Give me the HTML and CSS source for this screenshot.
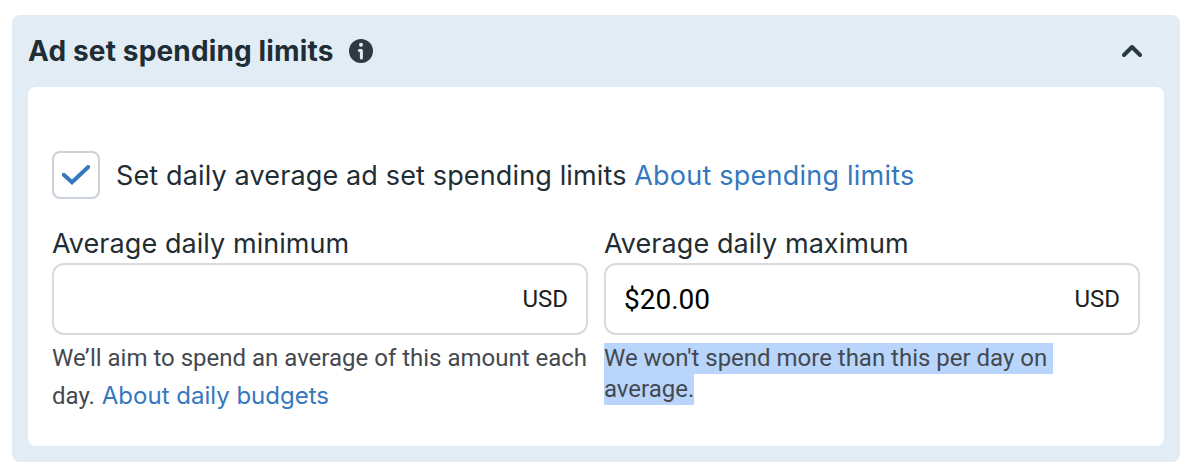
FILE: index.html
```html
<!DOCTYPE html>
<html lang="en">
  <head>
    <meta charset="UTF-8" />
    <meta name="viewport" content="width=device-width, initial-scale=1.0" />
    <title>Ad set spending limits</title>
    <link rel="stylesheet" href="styles.css">
  </head>
  <body>
    <section class="panel">
      <header class="panel-header">
        <h2>Ad set spending limits</h2>
        <svg class="info-icon" viewBox="0 0 24 24" width="24" height="24">
          <circle cx="12" cy="12" r="12" fill="#2d3a43" />
          <circle cx="12" cy="5.8" r="2" fill="#e2ecf5" />
          <path d="M10.3 11.4h2.1V19" fill="none" stroke="#e2ecf5" stroke-width="3" stroke-linecap="round" stroke-linejoin="round" />
        </svg>
        <svg class="chevron" viewBox="0 0 20 12" width="20" height="12">
          <path d="M2 10l8-8 8 8" fill="none" stroke="#283943" stroke-width="4" stroke-linecap="round" stroke-linejoin="round" />
        </svg>
      </header>

      <div class="card">
        <div class="check-row">
          <span class="checkbox">
            <svg viewBox="0 0 28 20" width="28" height="20">
              <path d="M1.8 9.8l8.2 7.4L26.2 2" fill="none" stroke="#3578be" stroke-width="4" stroke-linecap="round" />
            </svg>
          </span>
          <p><span class="check-label">Set daily average ad set spending limits</span> <a href="#" class="check-link">About spending limits</a></p>
        </div>

        <div class="fields">
          <div class="field">
            <label for="minimum">Average daily minimum</label>
            <div class="input-box">
              <input type="text" id="minimum" />
              <span>USD</span>
            </div>
            <p class="help help-min">We’ll aim to spend an average of this amount each<br />day. <a href="#">About daily budgets</a></p>
          </div>
          <div class="field">
            <label for="maximum">Average daily maximum</label>
            <div class="input-box">
              <input type="text" id="maximum" value="$20.00" />
              <span>USD</span>
            </div>
            <p class="help">
              <mark>We won't spend more than this per day on&nbsp;</mark>
              <mark>average.</mark>
            </p>
          </div>
        </div>
      </div>
    </section>
  </body>
</html>
```
FILE: styles.css
```css
/* General Styles */
* {
  box-sizing: border-box;
}

body {
  font-family: "Inter", sans-serif;
  margin: 0;
  padding: 15px 14px 14px 12px;
  background-color: #ffffff;
  color: #1f2d35;
}

h2,
p {
  margin: 0;
}

a {
  color: #3578be;
  text-decoration: none;
}

/* Panel Styles */
.panel {
  height: 447px;
  padding: 0 16px 16px;
  background-color: #e2ecf5;
  border-radius: 8px;
}

.panel-header {
  display: flex;
  align-items: center;
  height: 72px;
  padding: 0 22px 0 0;
}

.panel-header h2 {
  font-size: 28px;
  line-height: 36px;
  font-weight: 700;
  letter-spacing: 0.15px;
  white-space: nowrap;
}

.info-icon {
  margin-left: 15px;
}

.chevron {
  margin-left: auto;
}

.card {
  height: 359px;
  padding: 64px 24px 0;
  background-color: #ffffff;
  border-radius: 8px;
}

/* Checkbox Row */
.check-row {
  display: flex;
  align-items: center;
  gap: 16px;
  height: 48px;
  font-size: 27px;
  white-space: nowrap;
}

.check-label {
  letter-spacing: 0.14px;
}

.check-link {
  letter-spacing: 0.23px;
}

.checkbox {
  display: flex;
  align-items: center;
  justify-content: center;
  width: 48px;
  height: 48px;
  border: 2px solid #cbd2d9;
  border-radius: 8px;
}

/* Fields */
.fields {
  display: grid;
  grid-template-columns: 1fr 1fr;
  gap: 16px;
  margin-top: 26px;
}

.field label {
  display: block;
  height: 38px;
  font-size: 27px;
  line-height: 38px;
  letter-spacing: 0.06px;
  white-space: nowrap;
}

.input-box {
  display: flex;
  align-items: center;
  height: 72px;
  padding: 0 18px;
  border: 2px solid #dadada;
  border-radius: 12px;
  font-family: "Roboto", sans-serif;
  font-size: 24px;
  color: #1c1e21;
}

.input-box input {
  flex: 1;
  min-width: 0;
  padding: 0;
  border: none;
  outline: none;
  background: none;
  font-family: "Roboto", sans-serif;
  font-size: 28px;
  color: #000000;
}

.help {
  margin-top: 8px;
  font-family: "Roboto", sans-serif;
  font-size: 24px;
  line-height: 31px;
  color: #444950;
  white-space: nowrap;
}

.help-min {
  margin-top: 4px;
  line-height: 38px;
}

.help-min a {
  margin-left: 1px;
  font-family: "Inter", sans-serif;
}

.help mark {
  display: block;
  width: fit-content;
  background-color: #b9d5fb;
  color: #444950;
  letter-spacing: -0.01px;
}
```
